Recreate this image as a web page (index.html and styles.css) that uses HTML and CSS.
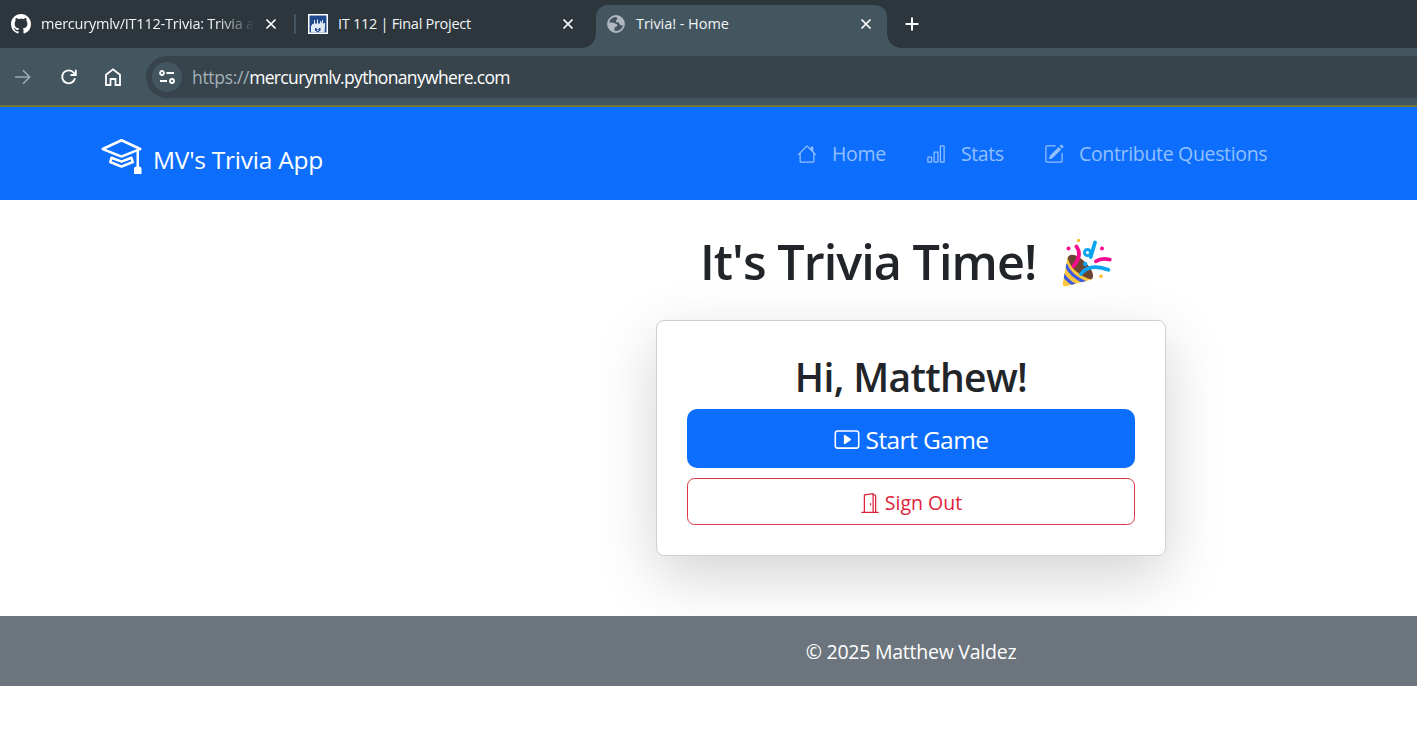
FILE: index.html
```html
<!DOCTYPE html>
<html lang="en">
<head>
<meta charset="utf-8">
<title>Trivia! - Home</title>
<link rel="stylesheet" href="styles.css">
</head>
<body>
<div class="browser">
  <div class="tabs">
    <div class="tab tab-first">
      <svg class="github" viewBox="0 0 16 16" fill="currentColor"><path d="M8 0c4.42 0 8 3.58 8 8a8.013 8.013 0 0 1-5.45 7.59c-.4.08-.55-.17-.55-.38 0-.27.01-1.13.01-2.2 0-.75-.25-1.23-.54-1.48 1.78-.2 3.65-.88 3.65-3.95 0-.88-.31-1.59-.82-2.15.08-.2.36-1.02-.08-2.12 0 0-.67-.22-2.2.82-.64-.18-1.32-.27-2-.27-.68 0-1.36.09-2 .27-1.53-1.03-2.2-.82-2.2-.82-.44 1.1-.16 1.92-.08 2.12-.51.56-.82 1.28-.82 2.15 0 3.06 1.86 3.75 3.64 3.95-.23.2-.44.55-.51 1.07-.46.21-1.61.55-2.33-.66-.15-.24-.6-.83-1.23-.82-.67.01-.27.38.01.53.34.19.73.9.82 1.13.16.45.68 1.31 2.69.94 0 .67.01 1.3.01 1.49 0 .21-.15.45-.55.38A7.995 7.995 0 0 1 0 8c0-4.42 3.58-8 8-8Z"/></svg>
      <span class="tab-title faded">mercurymlv/IT112-Trivia: Trivia a</span>
      <svg class="close" viewBox="0 0 12 12"><path d="M1.5 1.5l9 9m0-9l-9 9"/></svg>
    </div>
    <div class="divider"></div>
    <div class="tab tab-second">
      <svg class="school" viewBox="0 0 20 20"><path fill="#fff" d="M0 0h20v20H0z"/><path fill="#1f4a8d" d="M1.500 1.500h17v17h-17z"/><path fill="#dfe8f4" d="M3 18.500V12l1-1v-1h1v1l1-2V6h1v3l1 1 1-1V5.500h1V9l1 1 1-1V7h1v2l1-1V6h1v3l1 1V9h1v3l-.5 6.500z"/><path fill="#1f4a8d" d="M7 14h1.500v1h2.500v-1h1.500v2.500L9.800 18.500 7 16.500z"/><path fill="#dfe8f4" d="M9 15.500h1.500v1.500H9z"/></svg>
      <span class="tab-title t2">IT 112 | Final Project</span>
      <svg class="close" viewBox="0 0 12 12"><path d="M1.500 1.500l9 9m0-9l-9 9"/></svg>
    </div>
    <div class="tab tab-active">
      <svg class="globe" viewBox="0 0 18 18"><circle cx="9" cy="9" r="8" fill="#435660" stroke="#b0b7bf" stroke-width="1.800"/><path fill="#b0b7bf" d="M1.500 7.200C4 8 6.500 7 7.800 8.300s2.200.2 2.500 1.700-.8 1.500-2 2-.8 2.500-.8 4C4 16 1 12.500 1 9.500zM9.500 1.500 13 2l3.800 4.500-.3 3.500c-1.500.3-2.300.8-3.300 0s-.5-2-1.700-2.500-2.700.2-2.700-1.300 1.500-.7 1.500-1.900-.8-1.300-.8-2.800z"/></svg>
      <span class="tab-title t3">Trivia! - Home</span>
      <svg class="close" viewBox="0 0 12 12"><path d="M1.500 1.500l9 9m0-9l-9 9"/></svg>
    </div>
    <svg class="plus" viewBox="0 0 14 14"><path d="M7 .5v13M.5 7h13"/></svg>
  </div>
  <div class="toolbar">
    <svg class="forward" viewBox="0 0 16 16"><path d="M0 8h14.500M8 1.300 14.700 8 8 14.700"/></svg>
    <svg class="reload" viewBox="0 0 16 16"><path d="M14 9.200A6.500 6.500 0 1 1 12.800 3.800L14.500 5.500M14.800.8v5.200H9.500"/></svg>
    <svg class="homebtn" viewBox="0 0 16 18"><path d="M1 17V6.800L8 1.300l7 5.500V17h-4.500v-6h-5v6z"/></svg>
    <div class="omnibox">
      <div class="site-info"><svg viewBox="0 0 16 14"><circle cx="3" cy="3" r="2"/><path d="M7.500 3h7.500M1 11h7"/><circle cx="13" cy="11" r="2"/></svg></div>
      <span class="url"><span class="scheme">https://</span>mercurymlv.pythonanywhere.com</span>
    </div>
  </div>
</div>
<div class="page">
  <nav class="navbar">
    <a class="brand"><svg viewBox="0 0 16 16" fill="currentColor"><path d="M8.211 2.047a.5.5 0 0 0-.422 0l-7.500 3.500a.5.5 0 0 0 .025.917l7.500 3a.5.5 0 0 0 .372 0L14 7.140V13a1 1 0 0 0-1 1v2h3v-2a1 1 0 0 0-1-1V6.739l.686-.275a.5.5 0 0 0 .025-.917zM8 8.460 1.758 5.965 8 3.052l6.242 2.913z"/><path d="M4.176 9.032a.5.5 0 0 0-.656.327l-.5 1.700a.5.5 0 0 0 .294.605l4.500 1.800a.5.5 0 0 0 .372 0l4.500-1.800a.5.5 0 0 0 .294-.605l-.5-1.700a.5.5 0 0 0-.656-.327L8 10.466zm-.068 1.873.22-.748 3.496 1.311a.5.5 0 0 0 .352 0l3.496-1.311.22.748L8 12.460z"/></svg><span>MV's Trivia App</span></a>
    <div class="links">
      <a class="link link-home"><svg viewBox="0 0 16 16" fill="currentColor"><path d="M8.707 1.500a1 1 0 0 0-1.414 0L.646 8.146a.5.5 0 0 0 .708.708L2 8.207V13.500A1.500 1.500 0 0 0 3.500 15h9a1.500 1.500 0 0 0 1.500-1.500V8.207l.646.647a.5.5 0 0 0 .708-.708L13 5.793V2.500a.5.5 0 0 0-.5-.5h-1a.5.5 0 0 0-.5.5v1.293zM13 7.207V13.500a.5.5 0 0 1-.5.5h-9a.5.5 0 0 1-.5-.5V7.207l5-5z"/></svg><span>Home</span></a>
      <a class="link link-stats"><svg viewBox="0 0 16 16" fill="currentColor"><path d="M4 11H2v3h2zm5-4H7v7h2zm5-5v12h-2V2zm-2-1a1 1 0 0 0-1 1v12a1 1 0 0 0 1 1h2a1 1 0 0 0 1-1V2a1 1 0 0 0-1-1zM6 7a1 1 0 0 1 1-1h2a1 1 0 0 1 1 1v7a1 1 0 0 1-1 1H7a1 1 0 0 1-1-1zm-5 4a1 1 0 0 1 1-1h2a1 1 0 0 1 1 1v3a1 1 0 0 1-1 1H2a1 1 0 0 1-1-1z"/></svg><span>Stats</span></a>
      <a class="link link-contribute"><svg viewBox="0 0 16 16" fill="currentColor"><path d="M15.502 1.940a.5.5 0 0 1 0 .706L14.459 3.690l-2-2L13.502.646a.5.5 0 0 1 .707 0l1.293 1.293zm-1.750 2.456-2-2L4.939 9.210a.5.5 0 0 0-.121.196l-.805 2.414a.25.25 0 0 0 .316.316l2.414-.805a.5.5 0 0 0 .196-.12l6.813-6.814z"/><path fill-rule="evenodd" d="M1 13.500A1.500 1.500 0 0 0 2.500 15h11a1.500 1.500 0 0 0 1.500-1.500v-6a.5.5 0 0 0-1 0v6a.5.5 0 0 1-.5.5h-11a.5.5 0 0 1-.5-.5v-11a.5.5 0 0 1 .5-.5H9a.5.5 0 0 0 0-1H2.500A1.500 1.500 0 0 0 1 2.500z"/></svg><span>Contribute Questions</span></a>
    </div>
  </nav>
  <main class="main">
    <h1><span>It's Trivia Time!</span>
      <svg class="popper" viewBox="0 0 52 50" fill="none" stroke-linecap="round"><defs><clipPath id="cone"><path d="M6.500 19.500c2 7 5 11 9.500 14.500s9 6.500 15 7.500L5 48.200c-2 .4-3.800-.7-3.200-3.200z"/></clipPath></defs><path fill="#6d4534" d="M7 19c3-5 11-1 17 5s10 13 7 17c-4 3-13-1-18-7S5 23 7 19z"/><g clip-path="url(#cone)"><path fill="#ffc83d" d="M0 15h35v35H0z"/><path stroke="#3c5be8" stroke-width="3.200" stroke-linecap="butt" d="M4.500 26c3 8 11 15 21 19M2 36c3 5 7 8.500 12 11"/></g><path stroke="#f70a8d" stroke-width="3.800" d="M15.500 8.500c3.500 5 3.500 12-3 19.500M35 23.300c3.500-2.600 8-3 13.700-1.800"/><path stroke="#0aa5ee" stroke-width="3.800" d="M20 36c5-7 15-9 27.300-4.200M34 4.500l-4.300 14.500"/><circle cx="26.500" cy="14.500" r="3" stroke="#0aa5ee" stroke-width="3"/><circle cx="24.200" cy="26" r="2.200" fill="#0aa5ee"/><circle cx="7.500" cy="10.500" r="2" fill="#f70a8d"/><circle cx="41" cy="10.500" r="2" fill="#f70a8d"/><circle cx="17.500" cy="2.500" r="1.700" fill="#ffb92e"/><circle cx="40" cy="38.300" r="1.800" fill="#ffb92e"/></svg>
    </h1>
    <section class="card">
      <h2>Hi, Matthew!</h2>
      <a class="btn btn-start"><svg viewBox="0 0 16 16" fill="currentColor"><path d="M6.790 5.093A.5.5 0 0 0 6 5.500v5a.5.5 0 0 0 .79.407l3.500-2.500a.5.5 0 0 0 0-.814z"/><path d="M0 4a2 2 0 0 1 2-2h12a2 2 0 0 1 2 2v8a2 2 0 0 1-2 2H2a2 2 0 0 1-2-2zm15 0a1 1 0 0 0-1-1H2a1 1 0 0 0-1 1v8a1 1 0 0 0 1 1h12a1 1 0 0 0 1-1z"/></svg><span>Start Game</span></a>
      <a class="btn btn-out"><svg viewBox="0 0 16 16" fill="currentColor"><path d="M8.500 10c-.276 0-.5-.448-.5-1s.224-1 .5-1 .5.448.5 1-.224 1-.5 1"/><path d="M10.828.122A.5.5 0 0 1 11 .5V1h.5A1.500 1.500 0 0 1 13 2.500V15h1.500a.5.5 0 0 1 0 1h-13a.5.5 0 0 1 0-1H3V1.500a.5.5 0 0 1 .43-.495l7-1a.5.5 0 0 1 .398.117M11.500 2H11v13h1V2.500a.5.5 0 0 0-.5-.5M4 1.934V15h6V1.077z"/></svg><span>Sign Out</span></a>
    </section>
  </main>
  <footer class="footer"><span>© 2025 Matthew Valdez</span></footer>
</div>
</body>
</html>
```
FILE: styles.css
```css
* { box-sizing: border-box; }
html, body { margin: 0; height: 100%; overflow: hidden; background: #fff; }
body { font-family: "Open Sans", "Noto Sans", sans-serif; color: #212529; white-space: nowrap; }
svg { display: block; flex: none; overflow: visible; }
a { text-decoration: none; }

/* Browser frame */
.browser { height: 107px; background: #435660; border-bottom: 1px solid #7d7f13; color: #fff; overflow: hidden; box-shadow: inset 0 -1px #6b7448; }
.tabs { height: 47.5px; background: #2c363c; display: flex; align-items: center; }
.tab { height: 47px; display: flex; align-items: center; }
.tab-first { width: 295px; padding-left: 11px; }
.github { width: 20px; height: 20px; }
.tab-title { font-size: 14.5px; line-height: 20px; letter-spacing: -.22px; color: #f1f4f5; }
.faded { width: 214px; margin-left: 10px; -webkit-mask-image: linear-gradient(90deg, #000 175px, transparent 214px); mask-image: linear-gradient(90deg, #000 175px, transparent 214px); }
.close { width: 12px; height: 12px; fill: none; stroke: #fff; stroke-width: 1.7; }
.tab-first .close { margin-left: 10px; }
.divider { width: 2px; height: 20px; background: #435660; margin-right: 12px; margin-left: -1px; }
.tab-second { width: 288px; }
.school { width: 20px; height: 20px; }
.t2 { width: 224px; margin-left: 10px; letter-spacing: -.28px; }
.tab-active { position: relative; width: 291px; height: 42.5px; margin-top: 5px; border-radius: 12px 12px 0 0; background: #435660; padding: 0 0 5px 11px; }
.tab-active::before, .tab-active::after { content: ""; position: absolute; bottom: 0; width: 14px; height: 14px; }
.tab-active::before { left: -14px; background: radial-gradient(circle at 0 0, transparent 13.5px, #435660 14px); }
.tab-active::after { right: -14px; background: radial-gradient(circle at 100% 0, transparent 13.5px, #435660 14px); }
.globe { width: 18px; height: 18px; }
.t3 { width: 224px; margin: 1px 0 0 11px; letter-spacing: -.05px; }
.plus { width: 14px; height: 14px; margin-left: 18px; fill: none; stroke: #fff; stroke-width: 2; }
.toolbar { height: 58px; display: flex; align-items: center; padding-left: 15px; fill: none; stroke: #fff; stroke-width: 2; }
.forward { width: 16px; height: 16px; stroke: #9ea8b2; stroke-width: 1.6; }
.reload { width: 16px; height: 16px; margin-left: 30px; stroke-width: 1.8; }
.homebtn { width: 16px; height: 18px; margin-left: 28px; stroke-width: 1.8; }
.omnibox { flex: 1; height: 42px; margin-left: 25px; border-radius: 21px 0 0 21px; background: #38444b; display: flex; align-items: center; padding-left: 6px; }
.site-info { width: 30px; height: 30px; border-radius: 50%; background: #435660; display: grid; place-items: center; }
.site-info svg { width: 16px; height: 14px; stroke-width: 1.8; }
.url { margin-left: 10px; font-size: 17.5px; line-height: 24px; letter-spacing: -.66px; }
.scheme { color: #a3b1b9; letter-spacing: -.32px; }

/* Navigation */
.navbar { height: 93px; background: #0d6efd; display: flex; justify-content: space-between; padding-left: 101px; padding-right: 149px; }
.brand { display: flex; align-items: flex-start; color: #fff; font-size: 24.5px; letter-spacing: -.25px; line-height: 36px; }
.brand svg { width: 41px; height: 40px; margin-top: 27px; }
.brand span { margin: 35px 0 0 11px; }
.links { display: flex; height: 93px; align-items: center; font-size: 19.5px; line-height: 30px; color: #92c0ff; }
.link { display: flex; align-items: center; }
.link svg { width: 20px; height: 20px; margin-right: 15px; }
.link-home { width: 129px; letter-spacing: -.3px; }
.link-stats { width: 118px; letter-spacing: -.4px; }
.link-contribute { letter-spacing: -.33px; width: 224px; }

/* Content: shares the 911px centre line */
.main { height: 416px; display: flex; flex-direction: column; align-items: center; padding: 30px 0 0 405px; }
h1 { margin: 0 0 30px; height: 60px; display: flex; align-items: center; font-weight: 600; font-size: 48.5px; line-height: 60px; letter-spacing: -.95px; }
h1 span { width: 344px; margin-top: 2px; }
.popper { width: 52px; height: 50px; margin: 6px 9px 0 17px; }
.card { width: 510px; height: 236px; border: 1px solid #cfd0d1; border-radius: 8px; background: #fff; box-shadow: 0 20px 60px rgba(0,0,0,.175); padding: 30px; }
h2 { margin: 0; padding-top: 2px; height: 58px; text-align: center; font-weight: 600; font-size: 39px; line-height: 48px; letter-spacing: -.65px; }
.btn { display: flex; justify-content: center; align-items: center; padding-top: 2px; }
.btn-start { height: 59px; border-radius: 10px; background: #0d6efd; color: #fff; font-size: 24.5px; letter-spacing: -.6px; }
.btn-start svg { width: 26px; height: 25px; margin-right: 6px; }
.btn-out { height: 47px; margin-top: 10px; border: 1px solid #dc3545; border-radius: 7.5px; color: #dc2339; font-size: 19.5px; }
.btn-out svg { width: 20px; height: 20px; margin-right: 5px; }

/* Footer */
.footer { position: relative; height: 70px; background: #6c757d; color: #fff; display: flex; align-items: center; justify-content: center; padding: 2px 0 0 405px; font-size: 19.5px; letter-spacing: -.24px; line-height: 30px; }
```
